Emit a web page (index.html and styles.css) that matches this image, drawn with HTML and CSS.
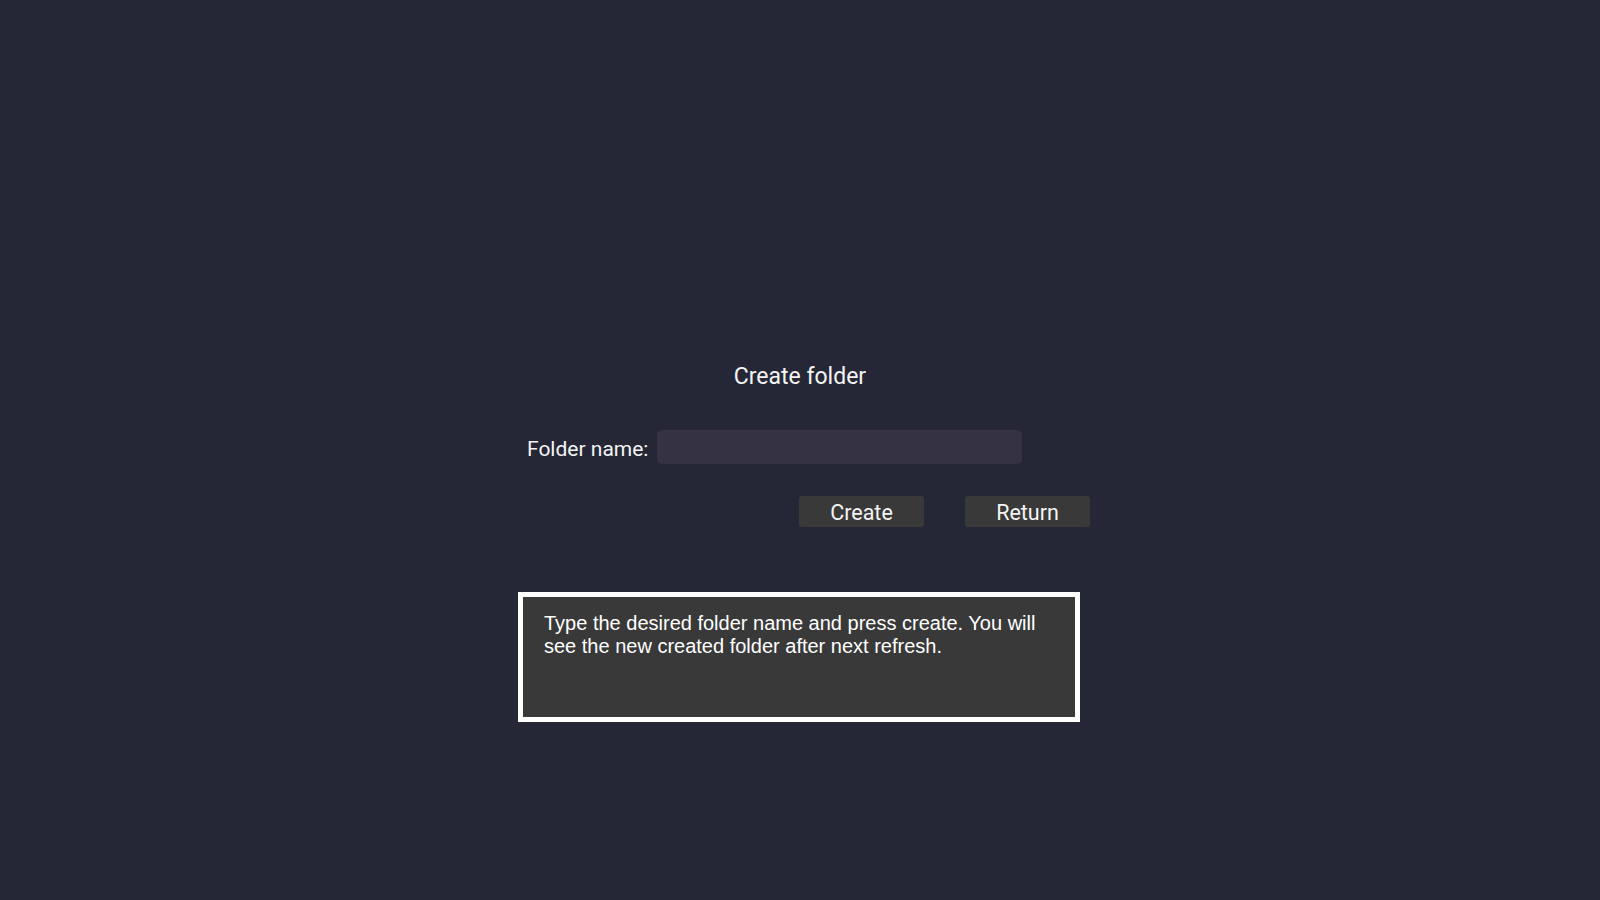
FILE: index.html
```html
<!DOCTYPE html>
<html lang="en">
<head>
<meta charset="utf-8">
<title>Create folder</title>
<link rel="stylesheet" href="styles.css">
</head>
<body>
<main class="page">
  <h1 class="title">Create folder</h1>
  <div class="form-row">
    <label class="label" for="folder">Folder name:</label>
    <input class="field" id="folder" type="text">
  </div>
  <div class="actions">
    <button class="btn" type="button">Create</button>
    <button class="btn" type="button">Return</button>
  </div>
  <div class="info">Type the desired folder name and press create. You will see the new created folder after next refresh.</div>
</main>
</body>
</html>
```
FILE: styles.css
```css
html, body {
  margin: 0;
  padding: 0;
  height: 100%;
}
body {
  background: #252736;
  color: #f2f2f2;
  font-family: Roboto, "Noto Sans", sans-serif;
}
.page {
  width: 600px;
  margin: 0 auto;
  padding-top: 362px;
  display: flex;
  flex-direction: column;
}
.title {
  margin: 0;
  font-size: 23px;
  font-weight: 400;
  line-height: 30px;
  text-align: center;
  color: #f4f4f4;
}
.form-row {
  margin-top: 38px;
  padding-left: 27px;
  display: flex;
  align-items: flex-start;
  height: 34px;
}
.label {
  width: 130px;
  padding-top: 2px;
  font-size: 21px;
  line-height: 34px;
  color: #f4f4f4;
  white-space: nowrap;
}
.field {
  box-sizing: border-box;
  width: 365px;
  height: 34px;
  border: none;
  border-radius: 5px;
  background: #353343;
  color: #fff;
  outline: none;
  padding: 0 8px;
  font: inherit;
}
.actions {
  margin-top: 32px;
  padding-left: 299px;
  display: flex;
  gap: 41px;
}
.btn {
  box-sizing: border-box;
  width: 125px;
  height: 31px;
  padding: 2px 0 0 0;
  border: none;
  border-radius: 3px;
  background: #393939;
  color: #f4f4f4;
  font-family: Roboto, "Noto Sans", sans-serif;
  font-size: 21.5px;
  line-height: 29px;
}
.info {
  box-sizing: border-box;
  margin-top: 65px;
  margin-left: 18px;
  width: 562px;
  height: 130px;
  border: 5px solid #ffffff;
  background: #393939;
  padding: 15px 21px 0 21px;
  font-family: "Liberation Sans", Arial, sans-serif;
  font-size: 20px;
  line-height: 23px;
  color: #ffffff;
}
```
